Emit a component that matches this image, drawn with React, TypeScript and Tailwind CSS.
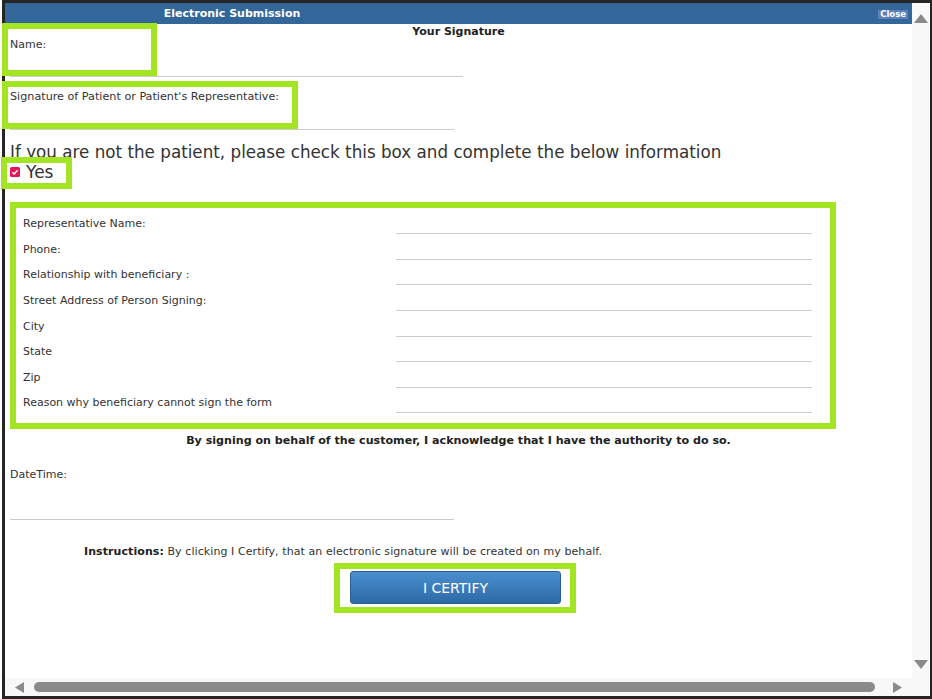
import React from "react";

const FONT = { fontFamily: '"DejaVu Sans", Verdana, sans-serif' };

const rows: { label: string; h: string }[] = [
  { label: "Representative Name:", h: "h-[26px]" },
  { label: "Phone:", h: "h-[26px]" },
  { label: "Relationship with beneficiary :", h: "h-[25px]" },
  { label: "Street Address of Person Signing:", h: "h-[26px]" },
  { label: "City", h: "h-[26px]" },
  { label: "State", h: "h-[25px]" },
  { label: "Zip", h: "h-[26px]" },
  { label: "Reason why beneficiary cannot sign the form", h: "h-[25px]" },
];

function Tri({ dir, className }: { dir: "up" | "down" | "left" | "right"; className?: string }) {
  const pts =
    dir === "up"
      ? "7,0 14,9 0,9"
      : dir === "down"
      ? "0,0 14,0 7,9"
      : dir === "left"
      ? "9,0 9,11 0,5.5"
      : "0,0 9,5.5 0,11";
  const vb = dir === "up" || dir === "down" ? "0 0 14 9" : "0 0 9 11";
  return (
    <svg viewBox={vb} className={className}>
      <polygon points={pts} fill="#8a8a8a" />
    </svg>
  );
}

export default function App() {
  return (
    <div className="relative w-[932px] h-[699px] bg-white overflow-hidden flex pl-[2px]" style={FONT}>
      <div className="flex-1 flex flex-col border-t-[3px] border-l-[3px] border-r-[2px] border-b-[3px] border-[#252525]">
        <div className="flex-1 flex min-h-0">
          {/* main */}
          <div className="flex-1 flex flex-col min-w-0 overflow-hidden text-[11px] text-[#333]">
            <div className="h-[21px] shrink-0 bg-[#336699] flex items-center">
              <div className="w-[454px] text-center text-white font-bold text-[11px] leading-[13px]">
                Electronic Submission
              </div>
              <div className="ml-auto mr-[4px] bg-[#5d80bd] text-white font-bold text-[8.5px] leading-[9px] px-[2px] mt-[1px]">
                Close
              </div>
            </div>

            <div className="mt-[1px] text-center font-bold leading-[13px] text-[#222]">Your Signature</div>

            <div className="ml-[5px] w-[453px] h-[39px] border-b border-[#cccccc]">
              <div className="leading-[13px]">Name:</div>
            </div>

            <div className="mt-[13px] ml-[5px] w-[444px] h-[40px] border-b border-[#cccccc]">
              <div className="leading-[13px] text-[11.2px]">Signature of Patient or Patient's Representative:</div>
            </div>

            <div className="mt-[12px] pl-[5px] text-[16.75px] leading-[20px] text-[#333] whitespace-nowrap">
              If you are not the patient, please check this box and complete the below information
            </div>
            <div className="pl-[5px] h-[20px] flex items-center gap-[6px] text-[17px] leading-[20px]">
              <svg viewBox="0 0 10 10" className="w-[10px] h-[10px]">
                <rect x="0" y="0" width="10" height="10" rx="1.5" fill="#e3165b" />
                <path d="M2.4 5.2 L4.2 7 L7.6 3.2" stroke="white" strokeWidth="1.5" fill="none" />
              </svg>
              <span>Yes</span>
            </div>

            <div className="mt-[20px] ml-[5px] w-[826px] border-[6px] border-[#a3e523] pl-[7px] pr-[18px] pb-[10px]">
              {rows.map((r) => (
                <div key={r.label} className={`flex items-end ${r.h}`}>
                  <div className="w-[373px] pb-[4px] leading-[13px]">{r.label}</div>
                  <div className="flex-1 h-full border-b border-[#cccccc]" />
                </div>
              ))}
            </div>

            <div className="mt-[5px] text-center font-bold leading-[13px] text-[#222] text-[11.1px]">
              By signing on behalf of the customer, I acknowledge that I have the authority to do so.
            </div>

            <div className="mt-[21px] ml-[5px] w-[444px] h-[52px] border-b border-[#cccccc]">
              <div className="leading-[13px]">DateTime:</div>
            </div>

            <div className="mt-[25px] ml-[79px] leading-[13px] whitespace-nowrap text-[11px] tracking-[0.08px]">
              <span className="font-bold text-[#222]">Instructions:</span> By clicking I Certify, that an electronic
              signature will be created on my behalf.
            </div>

            <div className="mt-[13px] ml-[345px]">
              <button className="w-[211px] h-[33px] rounded-[3px] border border-[#2b5f92] bg-gradient-to-b from-[#4a8fd0] to-[#2d6aa5] text-white text-[14px] leading-[16px]">
                I CERTIFY
              </button>
            </div>
          </div>

          {/* vertical scrollbar */}
          <div className="w-[18px] shrink-0 bg-[#f8f8f8] flex flex-col items-center justify-between pt-[11px] pb-[9px]">
            <Tri dir="up" className="w-[14px] h-[9px]" />
            <Tri dir="down" className="w-[14px] h-[9px]" />
          </div>
        </div>

        {/* horizontal scrollbar */}
        <div className="h-[18px] shrink-0 bg-[#f8f8f8] flex items-center pl-[10px]">
          <Tri dir="left" className="w-[9px] h-[11px]" />
          <div className="ml-[10px] w-[841px] h-[10px] rounded-full bg-[#8a8a8a]" />
          <Tri dir="right" className="ml-[18px] w-[9px] h-[11px]" />
        </div>
      </div>

      {/* annotation highlight overlays */}
      <div className="absolute left-[2px] top-[23px] w-[155px] h-[53px] border-[6px] border-[#a3e523]" />
      <div className="absolute left-[2px] top-[81px] w-[296px] h-[48px] border-[6px] border-[#a3e523]" />
      <div className="absolute left-[1px] top-[157px] w-[71px] h-[32px] border-[6px] border-[#a3e523]" />
      <div className="absolute left-[334px] top-[563px] w-[242px] h-[50px] border-[6px] border-[#a3e523]" />
    </div>
  );
}
